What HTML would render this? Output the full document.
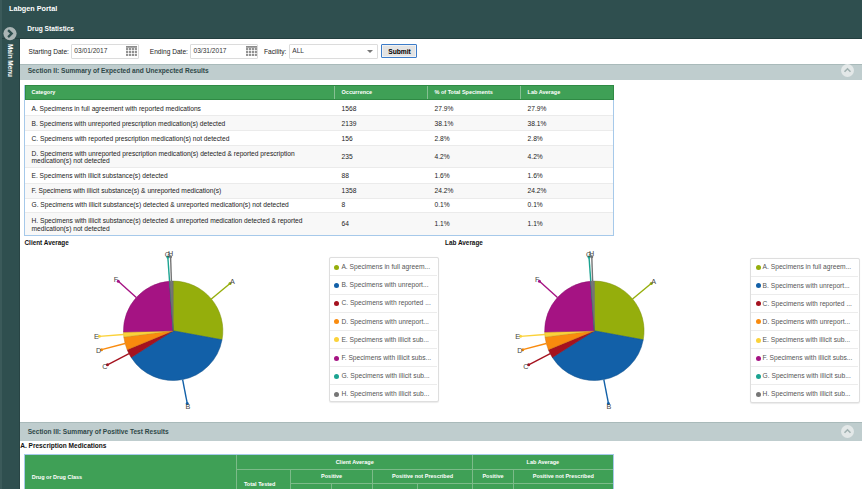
<!DOCTYPE html>
<html><head><meta charset="utf-8">
<style>
*{box-sizing:border-box}
html,body{margin:0;padding:0;width:862px;height:492px;overflow:hidden;background:#fff;font-family:"Liberation Sans",sans-serif;color:#333}
.abs{position:absolute}
#top{position:absolute;left:0;top:0;width:862px;height:39px;background:#2f4f4f;border-bottom:1px solid #233f3f}
#side{position:absolute;left:0;top:0;width:20px;height:488.6px;background:#2f4f4f;border-right:1px solid #284444}
.wt{position:absolute;color:#fff;font-weight:bold;white-space:nowrap;line-height:1}
.lbl{position:absolute;font-size:6.6px;white-space:nowrap;line-height:1;color:#222}
.inp{position:absolute;height:15px;border:1px solid #dcdcdc;border-radius:1px;background:#fff}
.inp span{position:absolute;left:2.3px;top:3.8px;font-size:6.6px;line-height:1;color:#333}
.cal{position:absolute;width:11px;height:10px}
.band{position:absolute;left:20px;width:842px;background:#bfcdce;border-top:1px solid #a9baba}
.band .t{position:absolute;left:7.7px;font-size:6.6px;font-weight:bold;color:#2f4848;white-space:nowrap;line-height:1}
.chev{position:absolute;width:13px;height:13px;border-radius:50%;background:#e3e8e8}
.cell{position:absolute;font-size:6.65px;line-height:1;color:#222;white-space:nowrap}
.hc{position:absolute;font-size:5.5px;line-height:1;color:#fff;font-weight:bold;white-space:nowrap}
.legend{position:absolute;width:109.5px;height:145px;border:1px solid #dedede;border-radius:2px;background:#fff;box-shadow:0 0.5px 1px rgba(0,0,0,0.08)}
.dot{position:absolute;left:4.3px;width:5px;height:5px;border-radius:50%}
.lt{position:absolute;left:11.2px;font-size:6.68px;line-height:1;color:#555;white-space:nowrap}
svg text{font-family:"Liberation Sans",sans-serif;font-size:7.2px;fill:#444}
</style></head><body>
<div id="side"></div>
<div id="top"></div>
<div class="abs" style="left:0;top:0;width:1.5px;height:488.6px;background:#3b5a5a"></div>
<div class="wt" style="left:9px;top:5.3px;font-size:7.24px">Labgen Portal</div>
<div class="wt" style="left:27.3px;top:26px;font-size:6.63px">Drug Statistics</div>
<svg class="abs" style="left:3px;top:27px" width="14" height="14" viewBox="0 0 14 14"><circle cx="7" cy="6.6" r="6.6" fill="#aab5b5"/><path d="M5.1,3.1 L8.7,6.6 L5.1,10.1" fill="none" stroke="#2f4f4f" stroke-width="2.3"/></svg>
<div class="wt" style="left:12.9px;top:43.7px;font-size:6.4px;transform-origin:0 0;transform:rotate(90deg)">Main Menu</div>

<div class="lbl" style="left:28.6px;top:48.5px">Starting Date:</div>
<div class="inp" style="left:71px;top:43.5px;width:68px"><span>03/01/2017</span></div>
<svg class="cal" style="left:126.3px;top:45.8px" viewBox="0 0 11 10"><g fill="none" stroke="#c2c2c2" stroke-width="0.9"><path d="M1,3 V9.6 M4,3 V9.6 M7,3 V9.6 M10,3 V9.6 M0.6,3 H10.4 M0.6,6 H10.4 M0.6,9 H10.4"/></g><g fill="#707070"><rect x="0" y="0.2" width="11" height="1.4"/>
<circle cx="1" cy="3" r="0.9"/><circle cx="4" cy="3" r="0.9"/><circle cx="7" cy="3" r="0.9"/><circle cx="10" cy="3" r="0.9"/>
<circle cx="1" cy="6" r="0.9"/><circle cx="4" cy="6" r="0.9"/><circle cx="7" cy="6" r="0.9"/><circle cx="10" cy="6" r="0.9"/>
<circle cx="1" cy="9" r="0.9"/><circle cx="4" cy="9" r="0.9"/><circle cx="7" cy="9" r="0.9"/><circle cx="10" cy="9" r="0.9"/></g></svg>
<div class="lbl" style="left:149.8px;top:48.5px">Ending Date:</div>
<div class="inp" style="left:190.2px;top:43.5px;width:68px"><span>03/31/2017</span></div>
<svg class="cal" style="left:245.6px;top:45.8px" viewBox="0 0 11 10"><g fill="none" stroke="#c2c2c2" stroke-width="0.9"><path d="M1,3 V9.6 M4,3 V9.6 M7,3 V9.6 M10,3 V9.6 M0.6,3 H10.4 M0.6,6 H10.4 M0.6,9 H10.4"/></g><g fill="#707070"><rect x="0" y="0.2" width="11" height="1.4"/>
<circle cx="1" cy="3" r="0.9"/><circle cx="4" cy="3" r="0.9"/><circle cx="7" cy="3" r="0.9"/><circle cx="10" cy="3" r="0.9"/>
<circle cx="1" cy="6" r="0.9"/><circle cx="4" cy="6" r="0.9"/><circle cx="7" cy="6" r="0.9"/><circle cx="10" cy="6" r="0.9"/>
<circle cx="1" cy="9" r="0.9"/><circle cx="4" cy="9" r="0.9"/><circle cx="7" cy="9" r="0.9"/><circle cx="10" cy="9" r="0.9"/></g></svg>
<div class="lbl" style="left:264px;top:48.5px">Facility:</div>
<div class="inp" style="left:289px;top:43.5px;width:89px"><span>ALL</span></div>
<svg class="abs" style="left:367.3px;top:49.6px" width="6" height="3" viewBox="0 0 6 3"><path d="M0,0 L6,0 L3,3Z" fill="#777"/></svg>
<div class="abs" style="left:381px;top:43.9px;width:36.2px;height:14.6px;border:1px solid #3d7cc9;background:#e3e3e3;box-shadow:inset 0 0 0 0.7px #f7f7f7;border-radius:1px"></div>
<div class="wt" style="left:388.2px;top:48.6px;font-size:6.7px;color:#000">Submit</div>

<div class="band" style="top:63.6px;height:16.7px"><div class="t" style="top:3.9px">Section II: Summary of Expected and Unexpected Results</div></div>
<div class="chev" style="left:841.3px;top:64.2px"></div>
<svg class="abs" style="left:841.3px;top:64.2px" width="13" height="13" viewBox="0 0 13 13"><path d="M3.5,7.8 L6.5,4.8 L9.5,7.8" fill="none" stroke="#a2b2b2" stroke-width="1.6"/></svg>

<!-- table 1 -->
<div class="abs" style="left:25px;top:99.3px;width:588px;height:16.0px;background:#fff;border-top:1px solid #ebebeb"></div>
<div class="cell" style="left:31.5px;top:105.52px">A. Specimens in full agreement with reported medications</div>
<div class="cell" style="left:341.6px;top:105.52px">1568</div>
<div class="cell" style="left:434.5px;top:105.52px">27.9%</div>
<div class="cell" style="left:527.6px;top:105.52px">27.9%</div>
<div class="abs" style="left:25px;top:115.3px;width:588px;height:14.7px;background:#f8f8f8;border-top:1px solid #ebebeb"></div>
<div class="cell" style="left:31.5px;top:120.87px">B. Specimens with unreported prescription medication(s) detected</div>
<div class="cell" style="left:341.6px;top:120.87px">2139</div>
<div class="cell" style="left:434.5px;top:120.87px">38.1%</div>
<div class="cell" style="left:527.6px;top:120.87px">38.1%</div>
<div class="abs" style="left:25px;top:130.0px;width:588px;height:14.8px;background:#fff;border-top:1px solid #ebebeb"></div>
<div class="cell" style="left:31.5px;top:135.62px">C. Specimens with reported prescription medication(s) not detected</div>
<div class="cell" style="left:341.6px;top:135.62px">156</div>
<div class="cell" style="left:434.5px;top:135.62px">2.8%</div>
<div class="cell" style="left:527.6px;top:135.62px">2.8%</div>
<div class="abs" style="left:25px;top:144.8px;width:588px;height:22.5px;background:#f8f8f8;border-top:1px solid #ebebeb"></div>
<div class="cell" style="left:31.5px;top:149.87px;line-height:7.4px">D. Specimens with unreported prescription medication(s) detected &amp; reported prescription<br>medication(s) not detected</div>
<div class="cell" style="left:341.6px;top:153.57px">235</div>
<div class="cell" style="left:434.5px;top:153.57px">4.2%</div>
<div class="cell" style="left:527.6px;top:153.57px">4.2%</div>
<div class="abs" style="left:25px;top:167.3px;width:588px;height:15.3px;background:#fff;border-top:1px solid #ebebeb"></div>
<div class="cell" style="left:31.5px;top:173.37px">E. Specimens with illicit substance(s) detected</div>
<div class="cell" style="left:341.6px;top:173.37px">88</div>
<div class="cell" style="left:434.5px;top:173.37px">1.6%</div>
<div class="cell" style="left:527.6px;top:173.37px">1.6%</div>
<div class="abs" style="left:25px;top:182.6px;width:588px;height:15.1px;background:#f8f8f8;border-top:1px solid #ebebeb"></div>
<div class="cell" style="left:31.5px;top:188.02px">F. Specimens with illicit substance(s) &amp; unreported medication(s)</div>
<div class="cell" style="left:341.6px;top:188.02px">1358</div>
<div class="cell" style="left:434.5px;top:188.02px">24.2%</div>
<div class="cell" style="left:527.6px;top:188.02px">24.2%</div>
<div class="abs" style="left:25px;top:197.7px;width:588px;height:14.7px;background:#fff;border-top:1px solid #ebebeb"></div>
<div class="cell" style="left:31.5px;top:202.37px">G. Specimens with illicit substance(s) detected &amp; unreported medication(s) not detected</div>
<div class="cell" style="left:341.6px;top:202.37px">8</div>
<div class="cell" style="left:434.5px;top:202.37px">0.1%</div>
<div class="cell" style="left:527.6px;top:202.37px">0.1%</div>
<div class="abs" style="left:25px;top:212.4px;width:588px;height:23.2px;background:#f8f8f8;border-top:1px solid #ebebeb"></div>
<div class="cell" style="left:31.5px;top:217.12px;line-height:7.4px">H. Specimens with illicit substance(s) detected &amp; unreported medication detected &amp; reported<br>medication(s) not detected</div>
<div class="cell" style="left:341.6px;top:220.82px">64</div>
<div class="cell" style="left:434.5px;top:220.82px">1.1%</div>
<div class="cell" style="left:527.6px;top:220.82px">1.1%</div>
<div class="abs" style="left:24px;top:85px;width:590px;height:151px;border:1px solid #a6c9ea"></div>
<div class="abs" style="left:24.5px;top:84.9px;width:589px;height:15.1px;background:#3fa056;border:1px solid #2f8a44"></div>
<div class="abs" style="left:333.5px;top:86px;width:1px;height:13px;background:#86c093"></div>
<div class="abs" style="left:427px;top:86px;width:1px;height:13px;background:#86c093"></div>
<div class="abs" style="left:519.5px;top:86px;width:1px;height:13px;background:#86c093"></div>
<div class="hc" style="left:31.5px;top:89.95px">Category</div>
<div class="hc" style="left:341.6px;top:89.95px">Occurrence</div>
<div class="hc" style="left:434.5px;top:89.95px">% of Total Speciments</div>
<div class="hc" style="left:527.6px;top:89.95px">Lab Average</div>

<div class="wt" style="left:24.5px;top:240.2px;font-size:6.4px;color:#111">Client Average</div>
<div class="wt" style="left:445px;top:240.2px;font-size:6.4px;color:#111">Lab Average</div>

<svg class="abs" style="left:0;top:0" width="862" height="492">
<line x1="211.34" y1="299.00" x2="230.02" y2="283.45" stroke="#95ae0c" stroke-width="1.4"/><circle cx="230.02" cy="283.45" r="1.5" fill="#95ae0c"/>
<line x1="182.62" y1="379.59" x2="187.24" y2="403.45" stroke="#1260a8" stroke-width="1.4"/><circle cx="187.24" cy="403.45" r="1.5" fill="#1260a8"/>
<line x1="129.01" y1="353.64" x2="107.43" y2="364.81" stroke="#a5121f" stroke-width="1.4"/><circle cx="107.43" cy="364.81" r="1.5" fill="#a5121f"/>
<line x1="125.09" y1="343.46" x2="101.59" y2="349.65" stroke="#f98b0e" stroke-width="1.4"/><circle cx="101.59" cy="349.65" r="1.5" fill="#f98b0e"/>
<line x1="123.59" y1="334.54" x2="99.36" y2="336.37" stroke="#fbd23a" stroke-width="1.4"/><circle cx="99.36" cy="336.37" r="1.5" fill="#fbd23a"/>
<line x1="136.29" y1="297.47" x2="118.26" y2="281.17" stroke="#a51383" stroke-width="1.4"/><circle cx="118.26" cy="281.17" r="1.5" fill="#a51383"/>
<line x1="169.56" y1="281.23" x2="167.81" y2="256.99" stroke="#1ba391" stroke-width="1.4"/><circle cx="167.81" cy="256.99" r="1.5" fill="#1ba391"/>
<line x1="171.43" y1="281.13" x2="170.59" y2="256.84" stroke="#767676" stroke-width="1.4"/><circle cx="170.59" cy="256.84" r="1.5" fill="#767676"/>
<path d="M173.15,330.80 L173.15,281.10 A49.7,49.7 0 0 1 222.03,339.81 Z" fill="#95ae0c" stroke="#7a8e09" stroke-width="0.5" stroke-linejoin="round"/>
<path d="M173.15,330.80 L222.03,339.81 A49.7,49.7 0 0 1 131.19,357.43 Z" fill="#1260a8" stroke="#0e4e89" stroke-width="0.5" stroke-linejoin="round"/>
<path d="M173.15,330.80 L131.19,357.43 A49.7,49.7 0 0 1 127.17,349.68 Z" fill="#a5121f" stroke="#870e19" stroke-width="0.5" stroke-linejoin="round"/>
<path d="M173.15,330.80 L127.17,349.68 A49.7,49.7 0 0 1 123.84,337.03 Z" fill="#f98b0e" stroke="#cc710b" stroke-width="0.5" stroke-linejoin="round"/>
<path d="M173.15,330.80 L123.84,337.03 A49.7,49.7 0 0 1 123.47,332.05 Z" fill="#fbd23a" stroke="#cdac2f" stroke-width="0.5" stroke-linejoin="round"/>
<path d="M173.15,330.80 L123.47,332.05 A49.7,49.7 0 0 1 169.41,281.24 Z" fill="#a51383" stroke="#870f6b" stroke-width="0.5" stroke-linejoin="round"/>
<path d="M173.15,330.80 L169.41,281.24 A49.7,49.7 0 0 1 169.72,281.22 Z" fill="#1ba391" stroke="#168576" stroke-width="0.5" stroke-linejoin="round"/>
<path d="M173.15,330.80 L169.72,281.22 A49.7,49.7 0 0 1 173.15,281.10 Z" fill="#767676" stroke="#606060" stroke-width="0.5" stroke-linejoin="round"/>
<text x="232.33" y="284.08" text-anchor="middle">A</text>
<text x="187.82" y="408.94" text-anchor="middle">B</text>
<text x="104.76" y="368.74" text-anchor="middle">C</text>
<text x="98.69" y="352.97" text-anchor="middle">D</text>
<text x="96.37" y="339.15" text-anchor="middle">E</text>
<text x="116.04" y="281.71" text-anchor="middle">F</text>
<text x="167.59" y="256.55" text-anchor="middle">G</text>
<text x="170.49" y="256.40" text-anchor="middle">H</text>

<line x1="632.54" y1="299.00" x2="651.22" y2="283.45" stroke="#95ae0c" stroke-width="1.4"/><circle cx="651.22" cy="283.45" r="1.5" fill="#95ae0c"/>
<line x1="603.82" y1="379.59" x2="608.44" y2="403.45" stroke="#1260a8" stroke-width="1.4"/><circle cx="608.44" cy="403.45" r="1.5" fill="#1260a8"/>
<line x1="550.21" y1="353.64" x2="528.63" y2="364.81" stroke="#a5121f" stroke-width="1.4"/><circle cx="528.63" cy="364.81" r="1.5" fill="#a5121f"/>
<line x1="546.29" y1="343.46" x2="522.79" y2="349.65" stroke="#f98b0e" stroke-width="1.4"/><circle cx="522.79" cy="349.65" r="1.5" fill="#f98b0e"/>
<line x1="544.79" y1="334.54" x2="520.56" y2="336.37" stroke="#fbd23a" stroke-width="1.4"/><circle cx="520.56" cy="336.37" r="1.5" fill="#fbd23a"/>
<line x1="557.49" y1="297.47" x2="539.46" y2="281.17" stroke="#a51383" stroke-width="1.4"/><circle cx="539.46" cy="281.17" r="1.5" fill="#a51383"/>
<line x1="590.76" y1="281.23" x2="589.01" y2="256.99" stroke="#1ba391" stroke-width="1.4"/><circle cx="589.01" cy="256.99" r="1.5" fill="#1ba391"/>
<line x1="592.63" y1="281.13" x2="591.79" y2="256.84" stroke="#767676" stroke-width="1.4"/><circle cx="591.79" cy="256.84" r="1.5" fill="#767676"/>
<path d="M594.35,330.80 L594.35,281.10 A49.7,49.7 0 0 1 643.23,339.81 Z" fill="#95ae0c" stroke="#7a8e09" stroke-width="0.5" stroke-linejoin="round"/>
<path d="M594.35,330.80 L643.23,339.81 A49.7,49.7 0 0 1 552.39,357.43 Z" fill="#1260a8" stroke="#0e4e89" stroke-width="0.5" stroke-linejoin="round"/>
<path d="M594.35,330.80 L552.39,357.43 A49.7,49.7 0 0 1 548.37,349.68 Z" fill="#a5121f" stroke="#870e19" stroke-width="0.5" stroke-linejoin="round"/>
<path d="M594.35,330.80 L548.37,349.68 A49.7,49.7 0 0 1 545.04,337.03 Z" fill="#f98b0e" stroke="#cc710b" stroke-width="0.5" stroke-linejoin="round"/>
<path d="M594.35,330.80 L545.04,337.03 A49.7,49.7 0 0 1 544.67,332.05 Z" fill="#fbd23a" stroke="#cdac2f" stroke-width="0.5" stroke-linejoin="round"/>
<path d="M594.35,330.80 L544.67,332.05 A49.7,49.7 0 0 1 590.61,281.24 Z" fill="#a51383" stroke="#870f6b" stroke-width="0.5" stroke-linejoin="round"/>
<path d="M594.35,330.80 L590.61,281.24 A49.7,49.7 0 0 1 590.92,281.22 Z" fill="#1ba391" stroke="#168576" stroke-width="0.5" stroke-linejoin="round"/>
<path d="M594.35,330.80 L590.92,281.22 A49.7,49.7 0 0 1 594.35,281.10 Z" fill="#767676" stroke="#606060" stroke-width="0.5" stroke-linejoin="round"/>
<text x="653.53" y="284.08" text-anchor="middle">A</text>
<text x="609.02" y="408.94" text-anchor="middle">B</text>
<text x="525.96" y="368.74" text-anchor="middle">C</text>
<text x="519.89" y="352.97" text-anchor="middle">D</text>
<text x="517.57" y="339.15" text-anchor="middle">E</text>
<text x="537.24" y="281.71" text-anchor="middle">F</text>
<text x="588.79" y="256.55" text-anchor="middle">G</text>
<text x="591.69" y="256.40" text-anchor="middle">H</text>

</svg>
<div class="legend" style="left:329.2px;top:257.3px"><span class="dot" style="background:#95ae0c;top:6.50px"></span><span class="lt" style="top:5.78px">A. Specimens in full agreem...</span><div class="abs" style="left:0;top:17.17px;width:107px;height:1px;background:#ececec"></div><span class="dot" style="background:#1260a8;top:24.75px"></span><span class="lt" style="top:24.03px">B. Specimens with unreport...</span><div class="abs" style="left:0;top:35.24px;width:107px;height:1px;background:#ececec"></div><span class="dot" style="background:#a5121f;top:42.87px"></span><span class="lt" style="top:42.15px">C. Specimens with reported ...</span><div class="abs" style="left:0;top:53.31px;width:107px;height:1px;background:#ececec"></div><span class="dot" style="background:#f98b0e;top:60.99px"></span><span class="lt" style="top:60.27px">D. Specimens with unreport...</span><div class="abs" style="left:0;top:71.38px;width:107px;height:1px;background:#ececec"></div><span class="dot" style="background:#fbd23a;top:79.11px"></span><span class="lt" style="top:78.39px">E. Specimens with illicit sub...</span><div class="abs" style="left:0;top:89.45px;width:107px;height:1px;background:#ececec"></div><span class="dot" style="background:#a51383;top:97.23px"></span><span class="lt" style="top:96.51px">F. Specimens with illicit subs...</span><div class="abs" style="left:0;top:107.52px;width:107px;height:1px;background:#ececec"></div><span class="dot" style="background:#1ba391;top:115.35px"></span><span class="lt" style="top:114.63px">G. Specimens with illicit sub...</span><div class="abs" style="left:0;top:125.59px;width:107px;height:1px;background:#ececec"></div><span class="dot" style="background:#767676;top:133.47px"></span><span class="lt" style="top:132.75px">H. Specimens with illicit sub...</span></div>
<div class="legend" style="left:750.4px;top:257.5px"><span class="dot" style="background:#95ae0c;top:6.50px"></span><span class="lt" style="top:5.78px">A. Specimens in full agreem...</span><div class="abs" style="left:0;top:17.17px;width:107px;height:1px;background:#ececec"></div><span class="dot" style="background:#1260a8;top:24.75px"></span><span class="lt" style="top:24.03px">B. Specimens with unreport...</span><div class="abs" style="left:0;top:35.24px;width:107px;height:1px;background:#ececec"></div><span class="dot" style="background:#a5121f;top:42.87px"></span><span class="lt" style="top:42.15px">C. Specimens with reported ...</span><div class="abs" style="left:0;top:53.31px;width:107px;height:1px;background:#ececec"></div><span class="dot" style="background:#f98b0e;top:60.99px"></span><span class="lt" style="top:60.27px">D. Specimens with unreport...</span><div class="abs" style="left:0;top:71.38px;width:107px;height:1px;background:#ececec"></div><span class="dot" style="background:#fbd23a;top:79.11px"></span><span class="lt" style="top:78.39px">E. Specimens with illicit sub...</span><div class="abs" style="left:0;top:89.45px;width:107px;height:1px;background:#ececec"></div><span class="dot" style="background:#a51383;top:97.23px"></span><span class="lt" style="top:96.51px">F. Specimens with illicit subs...</span><div class="abs" style="left:0;top:107.52px;width:107px;height:1px;background:#ececec"></div><span class="dot" style="background:#1ba391;top:115.35px"></span><span class="lt" style="top:114.63px">G. Specimens with illicit sub...</span><div class="abs" style="left:0;top:125.59px;width:107px;height:1px;background:#ececec"></div><span class="dot" style="background:#767676;top:133.47px"></span><span class="lt" style="top:132.75px">H. Specimens with illicit sub...</span></div>

<div class="band" style="top:421.6px;height:19px"><div class="t" style="top:6.6px">Section III: Summary of Positive Test Results</div></div>
<div class="chev" style="left:841.3px;top:425px"></div>
<svg class="abs" style="left:841.3px;top:425px" width="13" height="13" viewBox="0 0 13 13"><path d="M3.5,7.8 L6.5,4.8 L9.5,7.8" fill="none" stroke="#a2b2b2" stroke-width="1.6"/></svg>
<div class="wt" style="left:20.2px;top:443.3px;font-size:6.56px;color:#111">A. Prescription Medications</div>

<div class="abs" style="left:24px;top:454.3px;width:589.5px;height:34.4px;background:#3fa056;border:1px solid #a6c9ea;border-bottom:none;overflow:hidden"></div>
<div class="abs" style="left:236.2px;top:455px;width:1px;height:34px;background:#7cbb89"></div>
<div class="abs" style="left:236.7px;top:468.5px;width:376.3px;height:1px;background:#7cbb89"></div>
<div class="abs" style="left:290.3px;top:469px;width:1px;height:20px;background:#7cbb89"></div>
<div class="abs" style="left:290.8px;top:483.0px;width:322.2px;height:1px;background:#7cbb89"></div>
<div class="abs" style="left:371.9px;top:469px;width:1px;height:20px;background:#7cbb89"></div>
<div class="abs" style="left:472.2px;top:455px;width:1px;height:34px;background:#7cbb89"></div>
<div class="abs" style="left:512.9px;top:469px;width:1px;height:20px;background:#7cbb89"></div>
<div class="abs" style="left:330.9px;top:483.5px;width:1px;height:5.5px;background:#7cbb89"></div>
<div class="abs" style="left:417.0px;top:483.5px;width:1px;height:5.5px;background:#7cbb89"></div>
<div class="hc" style="left:31.7px;top:474.55px">Drug or Drug Class</div>
<div class="hc" style="left:294.7px;width:120px;text-align:center;top:459.65px">Client Average</div>
<div class="hc" style="left:482.9px;width:120px;text-align:center;top:459.65px">Lab Average</div>
<div class="hc" style="left:243.9px;top:481.75px">Total Tested</div>
<div class="hc" style="left:271.6px;width:120px;text-align:center;top:474.15px">Positive</div>
<div class="hc" style="left:362.6px;width:120px;text-align:center;top:474.15px">Positive not Prescribed</div>
<div class="hc" style="left:433.0px;width:120px;text-align:center;top:474.15px">Positive</div>
<div class="hc" style="left:503.29999999999995px;width:120px;text-align:center;top:474.15px">Positive not Prescribed</div>
<div class="hc" style="left:297.8px;top:489.45px">Count</div>
<div class="hc" style="left:339.2px;top:489.45px">%</div>
<div class="hc" style="left:379.6px;top:489.45px">Count</div>
<div class="hc" style="left:425px;top:489.45px">%</div>
<div class="hc" style="left:479.5px;top:489.45px">%</div>
<div class="hc" style="left:520.3px;top:489.45px">%</div>
<div class="abs" style="left:0;top:488.6px;width:862px;height:4px;background:#fff"></div>
</body></html>
